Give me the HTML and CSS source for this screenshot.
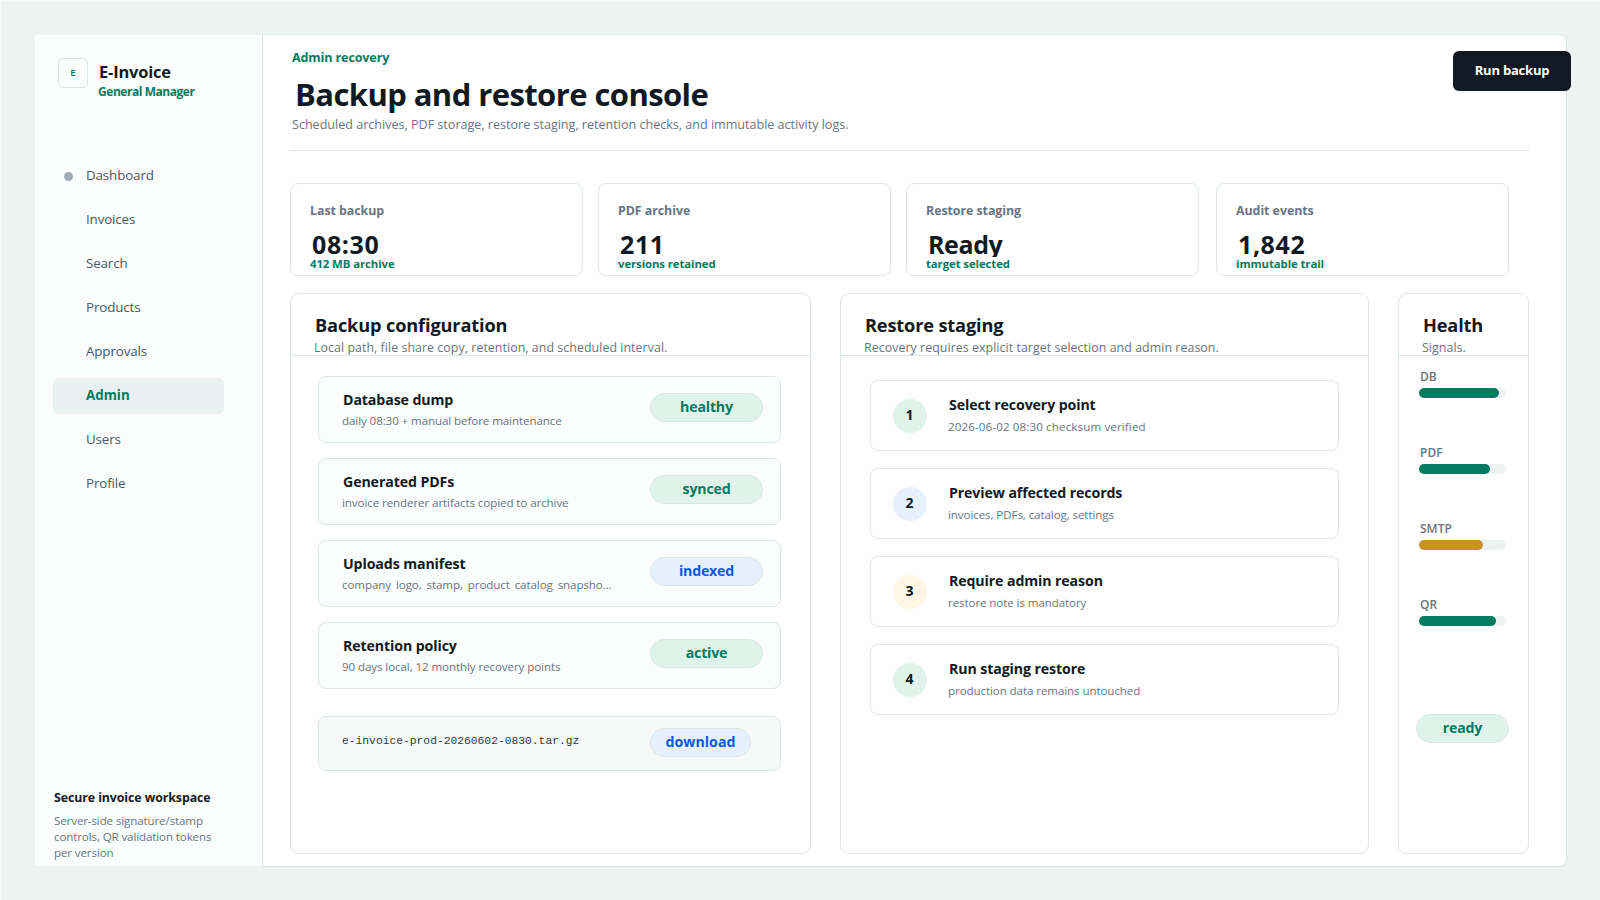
FILE: index.html
```html
<!DOCTYPE html>
<html lang="en">
	<head>
		<meta charset="utf-8">
		<title>E-Invoice - Backup and restore console</title>
		<link rel="stylesheet" href="styles.css">
	</head>
	<body>

<div class="app">

	<aside class="sidebar">
		<div class="brand">
			<div class="logo">E</div>
			<div>
				<div class="brand-name">E-Invoice</div>
				<div class="brand-role">General Manager</div>
			</div>
		</div>

		<nav>
			<a class="nav-item"><span class="dot"></span>Dashboard</a>
			<a class="nav-item">Invoices</a>
			<a class="nav-item">Search</a>
			<a class="nav-item">Products</a>
			<a class="nav-item">Approvals</a>
			<a class="nav-item nav-on">Admin</a>
			<a class="nav-item">Users</a>
			<a class="nav-item">Profile</a>
		</nav>

		<div class="side-note">
			<strong>Secure invoice workspace</strong>
			<p>Server-side signature/stamp<br>controls, QR validation tokens<br>per version</p>
		</div>
	</aside>

	<main>
		<header class="top">
			<div>
				<div class="eyebrow">Admin recovery</div>
				<h1>Backup and restore console</h1>
				<p class="lead">Scheduled archives, PDF storage, restore staging, retention checks, and immutable activity logs.</p>
			</div>
			<button class="run">Run backup</button>
		</header>

		<section class="stats">
			<div class="stat">
				<div class="stat-label">Last backup</div>
				<div class="stat-value digits">08:30</div>
				<div class="stat-sub">412 MB archive</div>
			</div>
			<div class="stat">
				<div class="stat-label">PDF archive</div>
				<div class="stat-value digits">211</div>
				<div class="stat-sub">versions retained</div>
			</div>
			<div class="stat">
				<div class="stat-label">Restore staging</div>
				<div class="stat-value">Ready</div>
				<div class="stat-sub">target selected</div>
			</div>
			<div class="stat">
				<div class="stat-label">Audit events</div>
				<div class="stat-value digits">1,842</div>
				<div class="stat-sub">immutable trail</div>
			</div>
		</section>

		<div class="panels">

			<section class="panel config">
				<div class="panel-head">
					<h2>Backup configuration</h2>
					<p>Local path, file share copy, retention, and scheduled interval.</p>
				</div>
				<div class="rows">
					<div class="row">
						<div class="row-text">
							<h3>Database dump</h3>
							<p>daily 08:30 + manual before maintenance</p>
						</div>
						<span class="badge green">healthy</span>
					</div>
					<div class="row">
						<div class="row-text">
							<h3>Generated PDFs</h3>
							<p>invoice renderer artifacts copied to archive</p>
						</div>
						<span class="badge green">synced</span>
					</div>
					<div class="row">
						<div class="row-text">
							<h3>Uploads manifest</h3>
							<p class="wide">company logo, stamp, product catalog snapsho...</p>
						</div>
						<span class="badge blue">indexed</span>
					</div>
					<div class="row">
						<div class="row-text">
							<h3>Retention policy</h3>
							<p>90 days local, 12 monthly recovery points</p>
						</div>
						<span class="badge green">active</span>
					</div>
					<div class="row file">
						<code>e-invoice-prod-20260602-0830.tar.gz</code>
						<span class="badge blue">download</span>
					</div>
				</div>
			</section>

			<section class="panel restore">
				<div class="panel-head">
					<h2>Restore staging</h2>
					<p>Recovery requires explicit target selection and admin reason.</p>
				</div>
				<div class="steps">
					<div class="step">
						<span class="num green">1</span>
						<div>
							<h3>Select recovery point</h3>
							<p class="stamp">2026-06-02 08:30 checksum verified</p>
						</div>
					</div>
					<div class="step">
						<span class="num blue">2</span>
						<div>
							<h3>Preview affected records</h3>
							<p>invoices, PDFs, catalog, settings</p>
						</div>
					</div>
					<div class="step">
						<span class="num amber">3</span>
						<div>
							<h3>Require admin reason</h3>
							<p>restore note is mandatory</p>
						</div>
					</div>
					<div class="step">
						<span class="num green">4</span>
						<div>
							<h3>Run staging restore</h3>
							<p>production data remains untouched</p>
						</div>
					</div>
				</div>
			</section>

			<section class="panel health">
				<div class="panel-head">
					<h2>Health</h2>
					<p>Signals.</p>
				</div>
				<div class="signals">
					<div class="signal">
						<label>DB</label>
						<div class="bar"><div class="fill" style="width: 92%"></div></div>
					</div>
					<div class="signal">
						<label>PDF</label>
						<div class="bar"><div class="fill" style="width: 82%"></div></div>
					</div>
					<div class="signal">
						<label>SMTP</label>
						<div class="bar"><div class="fill warn" style="width: 74%"></div></div>
					</div>
					<div class="signal">
						<label>QR</label>
						<div class="bar"><div class="fill" style="width: 88%"></div></div>
					</div>
				</div>
				<span class="badge green">ready</span>
			</section>

		</div>
	</main>

</div>

	</body>
</html>
```
FILE: styles.css
```css
* { box-sizing: border-box; }

html, body {
	height: 100%;
}

body {
	margin: 0;
	overflow: hidden;
	padding: 33px 0 0 34px;
	border-top: 1px solid #f5f8f7;
	border-left: 1px solid #f5f8f7;
	background: #edf3f1;
	color: #111a22;
	font-family: "Open Sans", "Noto Sans", sans-serif;
}

h1, h2, h3, p { margin: 0; }

.app {
	display: flex;
	width: 1532px;
	height: 833px;
}

/* sidebar */

.sidebar {
	display: flex;
	flex-direction: column;
	width: 227px;
	margin: 1px 0;
	background: #fbfdfc;
}

.brand {
	display: flex;
	height: 123px;
	padding: 23px 0 0 23px;
}

.logo {
	width: 30px;
	height: 30px;
	margin-right: 11px;
	border: 1px solid #dbe7e4;
	border-radius: 5px;
	text-align: center;
	font-size: 9.6px;
	font-weight: 600;
	line-height: 28px;
	color: #047a5f;
}

.brand-name {
	margin-top: 3px;
	font-size: 16.4px;
	font-weight: 700;
	line-height: 22px;
	letter-spacing: -.15px;
}

.brand-role {
	margin: 1px 0 0 -1px;
	font-size: 12px;
	font-weight: 700;
	line-height: 16px;
	letter-spacing: -.45px;
	color: #047a5f;
}

nav {
	display: flex;
	flex-direction: column;
	gap: 8px;
	padding: 0 38px 0 18px;
}

.nav-item {
	position: relative;
	height: 36px;
	padding-left: 33px;
	border-radius: 6px;
	font-size: 13.4px;
	line-height: 34px;
	letter-spacing: -.15px;
	color: #4a5764;
}

.nav-on {
	background: #e8f1f0;
	font-weight: 700;
	letter-spacing: 0;
	color: #047a5f;
}

.dot {
	position: absolute;
	left: 11px;
	top: 14px;
	width: 9px;
	height: 9px;
	border-radius: 50%;
	background: #9dacb8;
}

.side-note {
	margin-top: auto;
	padding: 0 0 5px 19px;
	font-size: 11.6px;
	line-height: 16px;
	letter-spacing: -.13px;
	color: #687583;
}

.side-note strong {
	display: block;
	margin-bottom: 6px;
	font-size: 12.4px;
	line-height: 18px;
	letter-spacing: -.1px;
	color: #111a22;
}

/* main area */

main {
	width: 1305px;
	padding-left: 27px;
	border: 1px solid #dbe7e4;
	border-radius: 0 8px 8px 0;
	background: #fff;
}

.top {
	display: flex;
	justify-content: space-between;
	width: 1239px;
	height: 116px;
	border-bottom: 1px solid #dbe7e4;
}

.eyebrow {
	margin: 14px 0 7px 2px;
	font-size: 12.6px;
	font-weight: 700;
	line-height: 18px;
	letter-spacing: -.15px;
	color: #047a5f;
}

h1 {
	margin-left: 5px;
	font-size: 31px;
	line-height: 40px;
	letter-spacing: -.58px;
}

.lead {
	margin: 2px 0 0 2px;
	font-size: 12.6px;
	line-height: 18px;
	letter-spacing: -.02px;
	color: #687583;
}

.run {
	width: 118px;
	height: 40px;
	margin: 16px -42px 0 0;
	padding: 0 0 2px;
	border: 0;
	border-radius: 6px;
	background: #111a22;
	font: 700 13px "Open Sans", sans-serif;
	letter-spacing: -.2px;
	color: #fff;
}

.stats {
	display: grid;
	grid-template-columns: 308px 308px 310px 293px;
	margin: 32px 0 17px;
}

.stat {
	width: 293px;
	height: 93px;
	padding: 18px 19px 0;
	border: 1px solid #dbe7e4;
	border-radius: 8px;
}

.stat-label {
	font-size: 12.4px;
	font-weight: 700;
	line-height: 18px;
	letter-spacing: -.05px;
	color: #687583;
}

/* the big number is cut just under its baseline */
.stat-value {
	height: 29px;
	margin: 8px 0 0 2px;
	overflow: hidden;
	font-size: 25px;
	font-weight: 700;
	line-height: 32px;
	letter-spacing: -.4px;
}

.digits { letter-spacing: .6px; }

.stat-sub {
	margin-top: -1px;
	font-size: 11.4px;
	font-weight: 700;
	line-height: 16px;
	letter-spacing: -.1px;
	color: #047a5f;
}

/* panels */

.panels {
	display: grid;
	grid-template-columns: 521px 529px 131px;
	gap: 29px;
	height: 561px;
}

.panel {
	border: 1px solid #dbe7e4;
	border-radius: 9px;
}

.panel-head {
	height: 62px;
	padding: 19px 0 0 23px;
	border-bottom: 1px solid #dbe7e4;
	white-space: nowrap;
}

h2 {
	margin-left: 1px;
	font-size: 18.2px;
	line-height: 24px;
	letter-spacing: -.15px;
}

.panel-head p {
	margin-top: 2px;
	font-size: 12.4px;
	line-height: 18px;
	letter-spacing: .05px;
	color: #687583;
}

h3 {
	margin-left: 1px;
	font-size: 14.2px;
	line-height: 20px;
	letter-spacing: -.12px;
}

.rows {
	display: flex;
	flex-direction: column;
	gap: 15px;
	padding: 20px 29px 0 27px;
}

.row {
	display: flex;
	height: 67px;
	padding: 13px 0 0 23px;
	border: 1px solid #dbe7e4;
	border-radius: 8px;
	background: #fbfdfc;
	white-space: nowrap;
}

.row-text, .row code { width: 308px; }

.row p, .step p {
	margin-top: 3px;
	font-size: 11.6px;
	line-height: 16px;
	letter-spacing: -.1px;
	color: #687583;
}

.row .wide { word-spacing: 2px; }

.file {
	height: 55px;
	margin-top: 12px;
	padding-top: 11px;
	background: #f7f9f8;
}

.row code {
	font: 11.3px/26px "Liberation Mono", monospace;
	color: #2c3946;
}

.badge {
	display: block;
	width: 113px;
	height: 29px;
	margin-top: 3px;
	border: 1px solid #dbe7e4;
	border-radius: 15px;
	text-align: center;
	font-size: 14.2px;
	font-weight: 700;
	line-height: 26px;
	letter-spacing: -.2px;
}

.file .badge {
	width: 101px;
	margin-top: 0;
	letter-spacing: 0;
}

.green { background: #dff3ea; }
.blue { background: #e7f0fe; }
.amber { background: #fff6e3; }
.badge.green { color: #047a5f; }
.badge.blue { color: #0b57e8; }

.steps {
	display: flex;
	flex-direction: column;
	gap: 17px;
	padding: 24px 29px 0;
}

.step {
	display: flex;
	height: 71px;
	padding: 14px 0 0 22px;
	border: 1px solid #dbe7e4;
	border-radius: 8px;
}

.step p { margin-top: 4px; }
.step .stamp { letter-spacing: .12px; }

.num {
	width: 34px;
	height: 34px;
	margin: 4px 21px 0 0;
	padding-right: 1px;
	border-radius: 50%;
	text-align: center;
	font-size: 14px;
	font-weight: 700;
	line-height: 32px;
}

.signals { padding: 12px 0 0 20px; }

.signal { height: 76px; }

.signal label {
	display: block;
	margin-left: 1px;
	font-size: 12px;
	font-weight: 600;
	line-height: 18px;
	color: #687583;
}

.bar {
	width: 87px;
	height: 10px;
	margin-top: 2px;
	border-radius: 5px;
	background: #edf2f0;
}

.fill {
	height: 10px;
	border-radius: 5px;
	background: #047a5f;
}

.warn { background: #c9902c; }

.health .badge {
	width: 93px;
	margin: 42px 0 0 17px;
}
```
